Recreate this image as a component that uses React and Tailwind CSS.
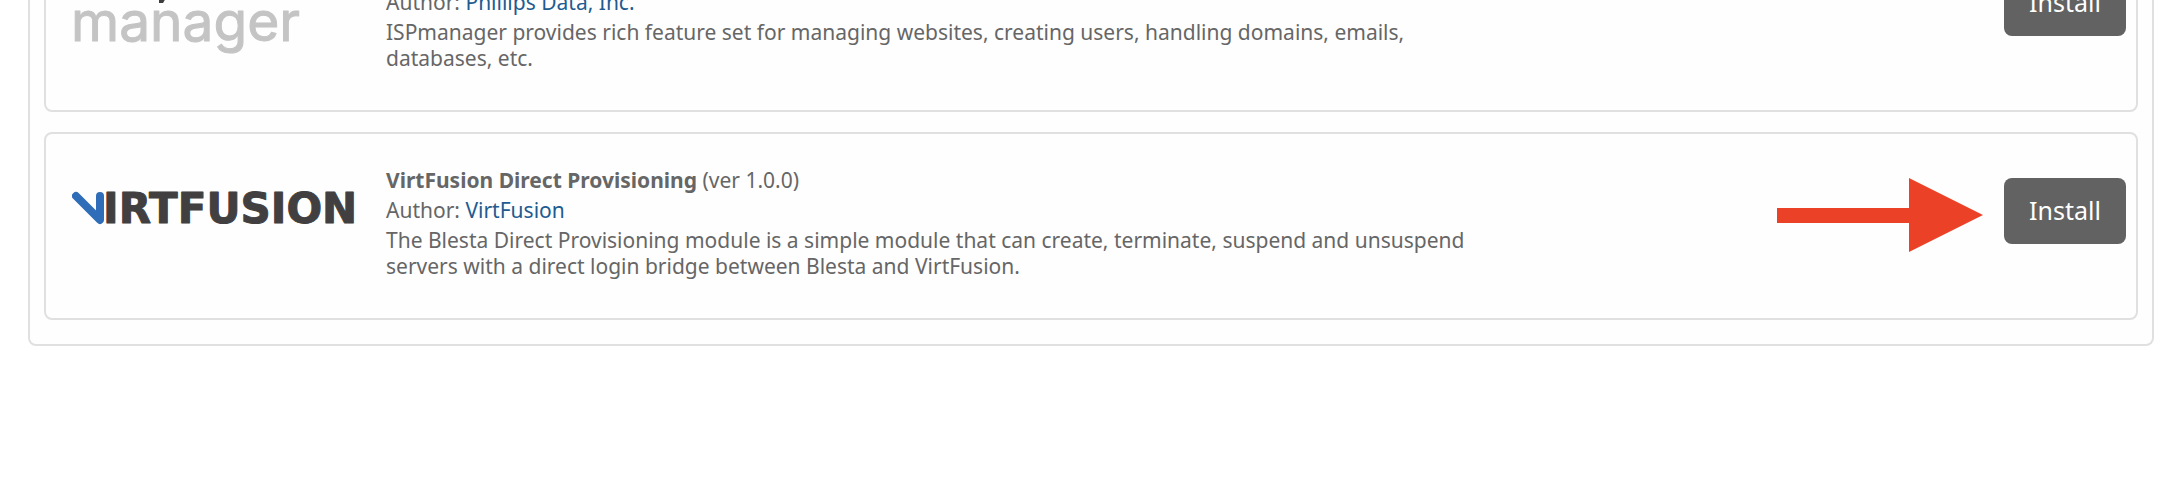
import React from "react";

function IspManagerLogo() {
  return (
    <svg width="286" height="110" viewBox="0 0 286 110" role="img" aria-label="ISPmanager">
      <path d="M87 39h7l-3 5h-4z" fill="#3d3d3d" />
      <text
        x="-1"
        y="82"
        fontSize="55"
        fontFamily="Inter, sans-serif"
        fill="#c4c4c4"
        stroke="#c4c4c4"
        strokeWidth="1"
        strokeLinejoin="round"
      >
        manager
      </text>
    </svg>
  );
}

function VirtFusionLogo() {
  return (
    <svg width="290" height="36" viewBox="0 0 290 36" role="img" aria-label="VirtFusion">
      <path d="M4 5 28 29V5" fill="none" stroke="#2f6db9" strokeWidth="8" strokeLinecap="round" strokeLinejoin="round" />
      <text
        x="31"
        y="32"
        fontSize="42"
        fontWeight="700"
        fontFamily="DejaVu Sans, sans-serif"
        fill="#413f40"
        stroke="#413f40"
        strokeWidth="1"
        strokeLinejoin="round"
      >
        IRTFUSION
      </text>
    </svg>
  );
}

function Arrow() {
  return (
    <svg width="206" height="76" viewBox="0 0 206 76" aria-hidden="true">
      <path d="M0 30h132V0l74 37-74 37V45H0z" fill="#ea4127" />
    </svg>
  );
}

const modules = [
  {
    id: "ispmanager",
    name: "ISPmanager",
    version: "1.0.0",
    author: "Phillips Data, Inc.",
    description:
      "ISPmanager provides rich feature set for managing websites, creating users, handling domains, emails, databases, etc.",
    logo: <IspManagerLogo />,
    logoClass: "pt-0",
  },
  {
    id: "virtfusion",
    name: "VirtFusion Direct Provisioning",
    version: "1.0.0",
    author: "VirtFusion",
    description:
      "The Blesta Direct Provisioning module is a simple module that can create, terminate, suspend and unsuspend servers with a direct login bridge between Blesta and VirtFusion.",
    logo: <VirtFusionLogo />,
    logoClass: "pt-6",
    highlighted: true,
  },
];

function ModuleCard({ module }) {
  return (
    <li className="flex items-start rounded-lg border-2 border-[#e0e0e0] pt-[33px] pb-[39px] pl-[26px] pr-[10px]">
      <div className={`h-28 w-[314px] shrink-0 ${module.logoClass}`}>{module.logo}</div>
      <div className="flex max-w-[1110px] flex-1 flex-col gap-1 text-[21px] leading-[26px]">
        <div>
          <strong className="font-bold">{module.name}</strong> (ver {module.version})
        </div>
        <div>
          Author: <a href="#" className="text-[#215b90]">{module.author}</a>
        </div>
        <p>{module.description}</p>
      </div>
      <div className="ml-auto flex items-start gap-[21px] pt-[11px]">
        {module.highlighted && <Arrow />}
        <button type="button" className="h-[66px] w-[122px] rounded-lg bg-[#626262] text-[25px] text-white">
          Install
        </button>
      </div>
    </li>
  );
}

export default function App() {
  return (
    <main className="flow-root min-h-screen overflow-hidden bg-white pr-[26px] pl-7 font-['Noto_Sans',sans-serif] text-[#666666]">
      <ul className="-mt-[100px] flex flex-col gap-5 rounded-lg border-2 border-[#e0e0e0] bg-[#fefefe] px-[14px] pt-[22px] pb-6">
        {modules.map((m) => (
          <ModuleCard key={m.id} module={m} />
        ))}
      </ul>
    </main>
  );
}
